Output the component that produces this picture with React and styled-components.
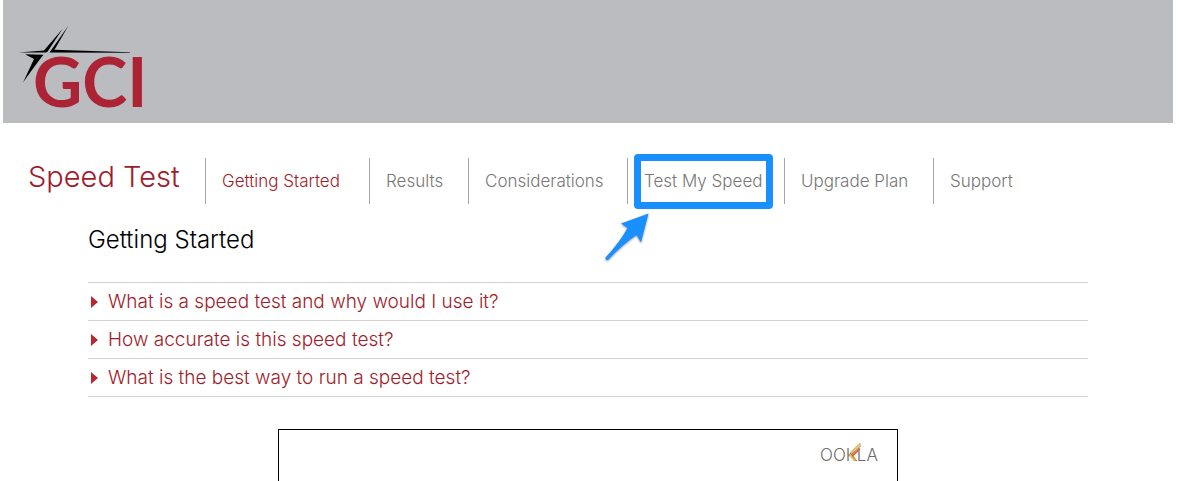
import React, { useState } from 'react';
import styled, { createGlobalStyle } from 'styled-components';

const links = [
  { label: 'Getting Started', href: '#getting-started' },
  { label: 'Results', href: '#results' },
  { label: 'Considerations', href: '#considerations' },
  { label: 'Test My Speed', href: '#test', marked: true },
  { label: 'Upgrade Plan', href: '#upgrade' },
  { label: 'Support', href: '#support' },
];

const questions = [
  'What is a speed test and why would I use it?',
  'How accurate is this speed test?',
  'What is the best way to run a speed test?',
];

const GlobalStyle = createGlobalStyle`
  * {
    box-sizing: border-box;
  }

  body {
    margin: 0;
    background-color: #fff;
    color: #000;
    font-family: Inter, "Liberation Sans", sans-serif;
  }
`;

const Page = styled.div`
  display: flex;
  flex-direction: column;
  height: 100vh;
  overflow: hidden;
  padding: 0 6px 0 3px;
`;

const Header = styled.header`
  flex: none;
  padding: 24px 15px 0;
  background-color: #bbbcc0;
`;

const HomeLink = styled.a`
  display: block;
  width: 130px;
`;

const Logo = styled.svg`
  display: block;
  overflow: visible;
`;

const TopBar = styled.div`
  display: flex;
  flex: none;
  padding: 35px 25px 0;
`;

const SiteTitle = styled.h1`
  width: 177px;
  margin: 0;
  color: #a01c2c;
  font-size: 29px;
  font-weight: 300;
  line-height: 38px;
`;

const Nav = styled.nav`
  display: grid;
  grid-template-columns: 164px 99px 159px 157px 149px auto;
`;

const NavItem = styled.div`
  position: relative;
  padding-left: 16px;
  border-left: 1px solid #a6a6a6;
`;

const NavLink = styled.a`
  color: ${({ $active }) => ($active ? '#a01c2c' : '#777')};
  font-size: 17px;
  font-weight: 300;
  line-height: 46px;
  text-decoration: none;
  white-space: nowrap;
`;

const Marker = styled.span`
  position: absolute;
  top: -4px;
  left: 6px;
  width: 139px;
  height: 55px;
  border: 7px solid #1a8fff;
  border-radius: 4px;
  pointer-events: none;
`;

const Arrow = styled.svg`
  position: absolute;
  top: 52px;
  left: -26px;
  overflow: visible;
  filter: drop-shadow(0 1px 1px rgba(0, 0, 0, 0.4));
  pointer-events: none;
`;

const Content = styled.main`
  flex: none;
  width: 100%;
  max-width: 1000px;
  margin: 0 auto;
`;

const SectionTitle = styled.h2`
  margin: 20px 0 27px;
  font-size: 24px;
  font-weight: 300;
  line-height: 31px;
`;

const Questions = styled.ul`
  margin: 0;
  padding: 0;
  border-top: 1px solid #d3d3d3;
  list-style: none;
`;

const Question = styled.li`
  border-bottom: 1px solid #d3d3d3;
`;

const QuestionButton = styled.button`
  display: flex;
  align-items: center;
  gap: 10px;
  width: 100%;
  padding: 0 3px;
  border: 0;
  background: none;
  color: #a01c2c;
  font-family: inherit;
  font-size: 19px;
  font-weight: 300;
  line-height: 37px;
  text-align: left;
  cursor: pointer;

  &::before {
    content: '';
    border-top: 6px solid transparent;
    border-bottom: 6px solid transparent;
    border-left: 7px solid #b8292f;
    transform: ${({ $open }) => ($open ? 'rotate(90deg)' : 'none')};
  }
`;

const Answer = styled.p`
  margin: 0;
  padding: 0 20px 12px;
  font-size: 16px;
`;

const TestPanel = styled.section`
  display: flex;
  justify-content: flex-end;
  align-items: flex-start;
  width: 62%;
  min-height: 350px;
  margin: 32px auto 0;
  padding: 12px 15px;
  border: 1px solid #000;
`;

const GciLogo = () => (
  <Logo width="130" height="99" viewBox="18 24 130 99" role="img" aria-label="GCI">
    <path d="M18.5 52.4 L44 50.4 Q47 47 62.5 29 L47.5 51.8 L46 52.6 Z" fill="#000" />
    <path d="M68.5 25.5 L54.5 49.8 L130 52.2 L130 52.7 L49.5 52.6 Z" fill="#000" />
    <path d="M25 54.3 L43.5 54.8 Q41 57.5 23 82.5 L34 59 Z" fill="#000" />
    <text x="33" y="107" fill="#ab2334" fontFamily="Lato, sans-serif" fontSize="68" fontWeight="700">
      GCI
    </text>
  </Logo>
);

const OoklaLogo = () => (
  <Logo width="62" height="26" viewBox="820 442 62 26" role="img" aria-label="Ookla">
    <text x="820" y="461" fill="#6c6c6c" fontFamily="Inter, sans-serif" fontSize="17" fontWeight="300">
      OOKLA
    </text>
    <path d="M850.5 453 L860.5 443.5" stroke="#e8c05a" strokeWidth="2" />
    <path d="M851 455 L861 445.5" stroke="#8a8078" strokeWidth="1" />
    <path d="M852 456 L859.5 449" stroke="#e8632c" strokeWidth="2" />
    <path d="M849.5 454.5 L855 461" stroke="#e8bf5a" strokeWidth="2" />
    <path d="M851.5 454.5 L857 461" stroke="#e8632c" strokeWidth="1" />
  </Logo>
);

const App = () => {
  const [open, setOpen] = useState(null);

  return (
    <Page>
      <GlobalStyle />
      <Header>
        <HomeLink href="#home">
          <GciLogo />
        </HomeLink>
      </Header>
      <TopBar>
        <SiteTitle>Speed Test</SiteTitle>
        <Nav>
          {links.map((link, index) => (
            <NavItem key={link.href}>
              <NavLink href={link.href} $active={index === 0}>{link.label}</NavLink>
              {link.marked && (
                <>
                  <Marker />
                  <Arrow width="50" height="54" viewBox="602 210 50 54" aria-hidden="true">
                    <path
                      d="M648.5 213.5 L641 242.5 L636.5 235 Q622 245 608.5 259.5 Q605.5 261.5 605.5 257.5 Q620 242 627.5 228 L621 223.5 Z"
                      fill="#1a8fff"
                    />
                  </Arrow>
                </>
              )}
            </NavItem>
          ))}
        </Nav>
      </TopBar>
      <Content>
        <SectionTitle>Getting Started</SectionTitle>
        <Questions>
          {questions.map((question, index) => (
            <Question key={question}>
              <QuestionButton
                $open={open === index}
                aria-expanded={open === index}
                onClick={() => setOpen(open === index ? null : index)}
              >
                {question}
              </QuestionButton>
              {open === index && <Answer>Run the test below to find out more.</Answer>}
            </Question>
          ))}
        </Questions>
        <TestPanel>
          <OoklaLogo />
        </TestPanel>
      </Content>
    </Page>
  );
};

export default App;
